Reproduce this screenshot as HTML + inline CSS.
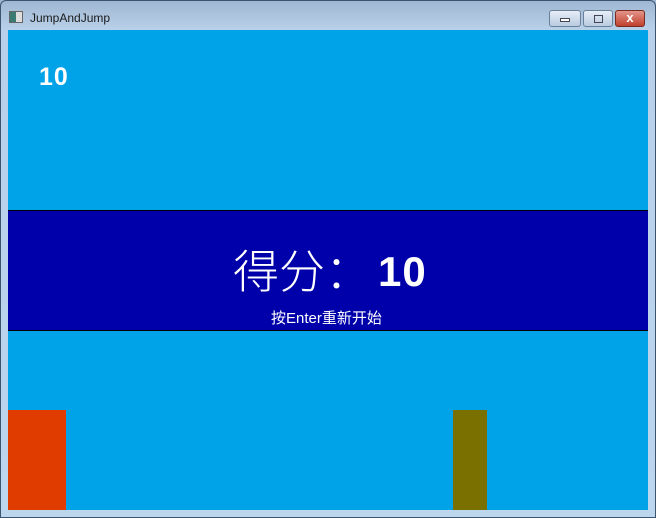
<!DOCTYPE html>
<html><head><meta charset="utf-8"><style>
*{margin:0;padding:0;box-sizing:border-box}
body{width:656px;height:518px;overflow:hidden;position:relative;background:linear-gradient(#9fb6d2 0,#b8d0e8 30px,#bcd6ee 100%);font-family:"Liberation Sans","Noto Sans CJK SC",sans-serif}
.frame{position:absolute;left:0;top:0;width:656px;height:518px;border:1px solid #3b5470;border-radius:6px 6px 0 0}
.title{position:absolute;left:30px;top:11px;font-size:12px;color:#1a1a1a;font-family:"Liberation Sans",sans-serif}
.icon{position:absolute;left:9px;top:11px;width:14px;height:12px;border:1px solid #666;background:linear-gradient(90deg,#3a7a70 0 50%,#ddd 50%)}
.btn{position:absolute;top:10px;height:17px;border:1px solid #6a7f99;border-radius:3px;background:linear-gradient(#e6eef7,#b9cbe0)}
.client{position:absolute;left:8px;top:30px;width:640px;height:480px;background:#00a2e8;overflow:hidden}
.band{position:absolute;left:0;top:180px;width:640px;height:121px;background:#0000aa;border-top:1px solid #000;border-bottom:1px solid #000}
.w{color:#fff;position:absolute;white-space:nowrap}
</style></head><body>
<div class="frame"></div>
<div class="icon"></div>
<div class="title">JumpAndJump</div>
<div class="btn" style="left:549px;width:32px"><div style="position:absolute;left:10px;top:7px;width:10px;height:4px;border:1px solid #445;background:#fff"></div></div>
<div class="btn" style="left:583px;width:30px"><div style="position:absolute;left:10px;top:4px;width:9px;height:8px;border:1px solid #445"></div></div>
<div class="btn" style="left:615px;width:30px;background:linear-gradient(#e4958a,#c0402e);border-color:#7a2a20"><div style="position:absolute;left:0;top:-1px;width:28px;text-align:center;color:#fff;font-weight:bold;font-size:13px">x</div></div>
<div class="client">
  <div class="w" style="left:31px;top:33px;font-size:25px;font-weight:bold;line-height:28px;letter-spacing:1px">10</div>
  <div class="band">
    <div class="w" style="left:225px;top:30px;font-size:46px;line-height:56px;font-family:'Noto Sans CJK SC',sans-serif;font-weight:300">得分：</div>
    <div class="w" style="left:370px;top:36px;font-size:42px;font-weight:bold;line-height:50px;letter-spacing:1px">10</div>
    <div class="w" style="left:263px;top:99px;font-size:15px;line-height:18px">按Enter重新开始</div>
  </div>
  <div style="position:absolute;left:0;top:380px;width:58px;height:100px;background:#e03c00"></div>
  <div style="position:absolute;left:445px;top:380px;width:34px;height:100px;background:#7a7000"></div>
</div>
</body></html>
